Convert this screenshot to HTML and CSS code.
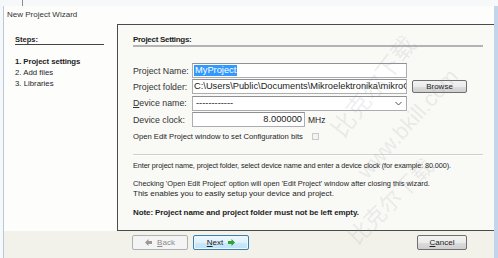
FILE: index.html
```html
<!DOCTYPE html>
<html>
<head>
<meta charset="utf-8">
<link rel="stylesheet" href="styles.css">
</head>
<body>
<div class="top"><span class="tick"></span></div>
<div class="window">
  <div class="titlebar">New Project Wizard</div>
  <div class="main">
    <div class="steps">
      <div class="steps-head">Steps:</div>
      <div class="step step-current">1. Project settings</div>
      <div class="step">2. Add files</div>
      <div class="step">3. Libraries</div>
    </div>
    <div class="panel">
      <div class="panel-head">Project Settings:</div>
      <div class="form">
        <div class="row">
          <span class="label">Project Name:</span>
          <span class="field field-wide"><span class="sel">MyProject</span></span>
        </div>
        <div class="row">
          <span class="label">Project folder:</span>
          <span class="field field-wide">C:\Users\Public\Documents\Mikroelektronika\mikroC</span>
          <span class="btn btn-browse">Browse</span>
        </div>
        <div class="row">
          <span class="label"><u>D</u>evice name:</span>
          <span class="field field-wide field-select"><span class="opt">------------</span>
            <svg class="chev" width="7" height="5" viewBox="0 0 7 5"><path d="M0.5 1 L3.5 4 L6.5 1" fill="none" stroke="#555" stroke-width="1"/></svg>
          </span>
        </div>
        <div class="row">
          <span class="label">Device clock:</span>
          <span class="field field-clock">8.000000</span>
          <span class="unit">MHz</span>
        </div>
      </div>
      <div class="check-row">
        <span class="check-text">Open Edit Project window to set Configuration bits</span>
        <span class="checkbox"></span>
      </div>
      <div class="sep"></div>
      <div class="desc">
        <p class="d1">Enter project name, project folder, select device name and enter a device clock (for example: 80.000).</p>
        <p class="d2">Checking 'Open Edit Project' option will open 'Edit Project' window after closing this wizard.</p>
        <p class="d3">This enables you to easily setup your device and project.</p>
        <p class="note">Note: Project name and project folder must not be left empty.</p>
      </div>
    </div>
  </div>
  <div class="footer">
    <div class="nav">
      <span class="btn btn-nav btn-disabled">
        <svg width="7" height="7" viewBox="0 0 7 7"><path d="M0 3.5 L3.5 0 V2 H7 V5 H3.5 V7 Z" fill="#9a9a9a"/></svg>
        <span><u>B</u>ack</span>
      </span>
      <span class="btn btn-nav btn-default">
        <span><u>N</u>ext</span>
        <svg width="7" height="7" viewBox="0 0 7 7"><path d="M7 3.5 L3.5 0 V2 H0 V5 H3.5 V7 Z" fill="#2fa32f"/></svg>
      </span>
    </div>
    <span class="btn btn-cancel"><span><u>C</u>ancel</span></span>
  </div>
  <div class="wm wm1">比克尔下载</div>
  <div class="wm wm2">www.bkill.com</div>
  <div class="wm wm3">比克尔下载</div>
</div>
</body>
</html>
```

FILE: styles.css
```css
* { box-sizing: border-box; }
html, body { margin: 0; padding: 0; }
body {
  width: 498px;
  height: 258px;
  overflow: hidden;
  background: #f7f8fa;
  font-family: "Liberation Sans", Arial, sans-serif;
  color: #1e1e1e;
}
.top {
  height: 6px;
  display: flex;
  padding-left: 22px;
}
.tick {
  width: 1px;
  height: 6px;
  background: #7f8fa3;
}
.window {
  position: relative;
  overflow: hidden;
  height: 252px;
  margin-left: 3px;
  border-left: 1px solid #b9c8da;
  border-right: 4px solid #c2d5ea;
  background: #fdfdfc;
  display: flex;
  flex-direction: column;
}
.titlebar {
  height: 18px;
  line-height: 18px;
  padding-left: 3px;
  font-size: 8px;
  color: #333;
}
.main {
  display: flex;
  height: 207px;
}
.steps {
  width: 113px;
  padding: 10px 0 0 11px;
}
.steps-head {
  width: 89px;
  font-size: 7.5px;
  font-weight: bold;
  line-height: 9px;
  padding-top: 1px;
  border-bottom: 1px solid #444;
  margin-bottom: 11px;
}
.step {
  font-size: 7.8px;
  line-height: 11px;
}
.step-current {
  font-weight: bold;
  letter-spacing: -0.1px;
}
.panel {
  flex: 1;
  border: 1px solid #4b4b4b;
  border-right: none;
  background: #f9f9f6;
  padding: 0 11px 0 15px;
  display: flex;
  flex-direction: column;
}
.panel-head {
  margin-top: 9px;
  font-size: 8px;
  letter-spacing: -0.3px;
  font-weight: bold;
  line-height: 11px;
  border-bottom: 2px solid #b4b4b4;
}
.form {
  margin-top: 16px;
  display: flex;
  flex-direction: column;
  gap: 1px;
}
.row {
  display: flex;
  align-items: center;
  height: 15.3px;
}
.label {
  width: 59px;
  font-size: 8.8px;
  color: #333;
  white-space: nowrap;
}
.field {
  height: 15px;
  border: 1px solid #abadb3;
  border-top-color: #8e9096;
  background: #fff;
  font-size: 9.3px;
  line-height: 13px;
  padding: 0 1px;
  white-space: nowrap;
  overflow: hidden;
  color: #222;
}
.field-wide { width: 215px; }
.sel {
  background: #3399ff;
  color: #fff;
  padding: 0 1px;
  display: inline-block;
  line-height: 11px;
}
.field-select {
  display: flex;
  align-items: center;
  justify-content: space-between;
  padding: 0 4px 0 3px;
}
.chev { flex: none; }
.btn-browse {
  margin-left: 5px;
  width: 55px;
  height: 13px;
  font-size: 8px;
}
.field-clock {
  width: 113px;
  text-align: right;
  padding-right: 2px;
}
.unit {
  margin-left: 3px;
  font-size: 8.5px;
}
.check-row {
  margin-top: 4px;
  height: 11px;
  display: flex;
  align-items: center;
}
.check-text {
  font-size: 7.65px;
}
.checkbox {
  margin-left: 9px;
  width: 7px;
  height: 7px;
  border: 1px solid #c9c9c9;
  background: #f3f3f3;
}
.sep {
  margin-top: 12px;
  height: 1px;
  background: #cfcfcf;
  border-bottom: 1px solid #fff;
  box-sizing: content-box;
}
.desc p {
  margin: 0;
  line-height: 10px;
  white-space: nowrap;
}
.d1 { margin-top: 5px !important; font-size: 7.3px; letter-spacing: -0.1px; }
.d2 { margin-top: 7.5px !important; font-size: 7.4px; }
.d3 { font-size: 8px; }
.note {
  margin-top: 9px !important;
  font-size: 8px;
  font-weight: bold;
  letter-spacing: -0.1px;
}
.footer {
  flex: 1;
  background: #f2f1ea;
  display: flex;
  justify-content: space-between;
  align-items: flex-start;
  padding: 4px 27px 0 128px;
}
.nav {
  display: flex;
  gap: 5px;
}
.btn {
  display: inline-flex;
  align-items: center;
  justify-content: center;
  gap: 5px;
  border: 1px solid #707070;
  border-radius: 2px;
  background: linear-gradient(#f2f2f2 0%, #ebebeb 50%, #dddddd 51%, #cfcfcf 100%);
  font-size: 8px;
  color: #222;
}
.btn-nav {
  width: 56px;
  height: 15px;
}
.btn-disabled {
  border-color: #adb2b5;
  background: #f4f4f4;
  color: #8a8a8a;
}
.btn-default {
  border-color: #3c7fb1;
  background: linear-gradient(#eef7fd 0%, #e0f1fc 50%, #cde9fb 51%, #bfe1f7 100%);
  box-shadow: inset 0 0 0 1px #eef7fd;
}
.btn-cancel {
  width: 50px;
  height: 15px;
}
.wm {
  position: absolute;
  color: rgba(150, 150, 150, 0.16);
  white-space: nowrap;
  pointer-events: none;
}
.wm1 {
  left: 308px;
  top: 62px;
  font-size: 24px;
  transform: rotate(-52deg);
  font-family: "Noto Sans CJK SC", sans-serif;
}
.wm2 {
  left: 335px;
  top: 105px;
  font-size: 22px;
  transform: rotate(-48deg);
  font-family: "Liberation Sans", sans-serif;
}
.wm3 {
  left: 330px;
  top: 178px;
  font-size: 22px;
  transform: rotate(-45deg);
  font-family: "Noto Sans CJK SC", sans-serif;
}
```
